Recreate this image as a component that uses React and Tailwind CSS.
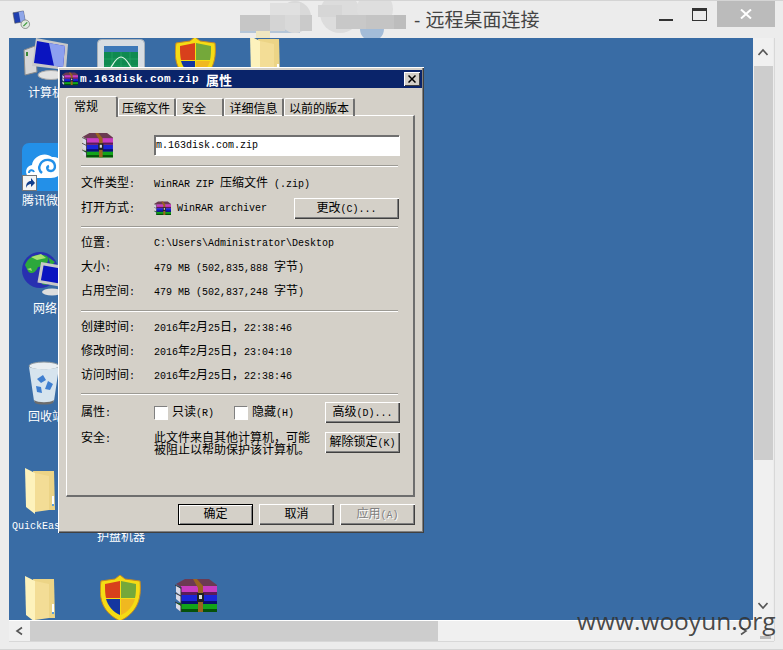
import React from 'react';

const split = text => text.split(/([\u3000-\u9fff\uff00-\uffef]+)/).filter(Boolean);

// SimSun-style mix: CJK at 12px, latin at half width (10px mono)
function T({ children, className = '' }) {
    return (
        <span className={`whitespace-pre font-['Liberation_Mono','Noto_Sans_CJK_SC',monospace] text-[10px] leading-3 [text-spacing-trim:space-all] ${className}`}>
            {split(children).map((part, i) =>
                /[\u3000-\u9fff\uff00-\uffef]/.test(part) ? (
                    <span key={i} className="font-['Noto_Sans_CJK_SC',sans-serif] text-[12px]">
                        {part}
                    </span>
                ) : (
                    part
                )
            )}
        </span>
    );
}

function Rar({ className }) {
    return (
        <svg viewBox="0 0 42 34" className={className}>
            <path d="M1 24l5 9h36v-9z" fill="#0f8f14" />
            <path d="M1 24l5 3v6l-5-4z" fill="#d9d9e6" />
            <rect x="6" y="25" width="36" height="8" fill="#12a41a" />
            <rect x="6" y="30" width="36" height="3" fill="#06520a" />
            <path d="M1 14l5 3v7l-5-4z" fill="#d9d9e6" />
            <rect x="6" y="16" width="36" height="9" fill="#1a24d8" />
            <rect x="6" y="22" width="36" height="3" fill="#0a0e70" />
            <path d="M1 6l5 4v7l-5-4z" fill="#d9d9e6" />
            <path d="M1 5l9-5h24l8 6v2H6z" fill="#6b3a52" />
            <rect x="6" y="7" width="36" height="9" fill="#c83cc0" />
            <rect x="6" y="13" width="36" height="3" fill="#5c1c58" />
            <path d="M18 0h4l6 7v26h-5V9z" fill="#9a6420" />
            <rect x="22" y="14" width="7" height="9" fill="#222" />
            <rect x="24" y="16" width="3" height="4" fill="#ddd" />
            <path d="M0 6l6 3M0 14l6 3M0 23l6 3M6 8v25" stroke="#333" fill="none" />
        </svg>
    );
}

function Shield({ className }) {
    return (
        <svg viewBox="0 0 41 46" className={className}>
            <path d="M20 0l5 4 15 2c2 20-4 32-20 40C4 38-2 26 1 6l14-2z" fill="#f5dc14" stroke="#c98a20" />
            <path d="M20 6L5 9c0 5 0 10 1 14h14z" fill="#d8401c" />
            <path d="M21 6l15 3c0 5 0 10-1 14H21z" fill="#74a83a" />
            <path d="M6 24h14v16C13 37 8 31 6 24z" fill="#1436a0" />
            <path d="M21 24h14c-2 7-7 13-14 16z" fill="#f0b820" />
        </svg>
    );
}

function Folder({ className }) {
    return (
        <svg viewBox="0 0 30 46" className={className}>
            <path d="M8 3h21l1 39H12z" fill="#ecd486" />
            <path d="M0 0l10 5 0 41-9-7z" fill="#fdf2bc" />
            <path d="M10 5l14 3 0 34-14 2z" fill="#f3dd96" />
            <rect x="27" y="28" width="2" height="10" fill="#fff" />
            <rect x="27" y="36" width="2" height="2" fill="#5aa0e0" />
        </svg>
    );
}

function Computer({ className }) {
    return (
        <svg viewBox="0 0 46 42" className={className}>
            <path d="M1 12l11-4 2 26-12 3z" fill="#d6d6d6" stroke="#8a8a8a" />
            <rect x="3" y="14" width="2" height="4" fill="#3a8a3a" />
            <path d="M13 0l32 6-2 26-34-4z" fill="#c8c8c8" />
            <path d="M14 3l28 5-2 21-29-4z" fill="#0a14c0" />
            <path d="M26 5l16 3-2 21-9-1z" fill="#8ca0f0" />
            <ellipse cx="28" cy="37" rx="13" ry="4.5" fill="#e2e2e2" stroke="#aaa" />
        </svg>
    );
}

function MonitorApp({ className }) {
    return (
        <svg viewBox="0 0 48 40" className={className}>
            <rect x="0.5" y="0.5" width="47" height="40" rx="4" fill="#d8dde2" stroke="#a8b0b8" />
            <rect x="7" y="7" width="34" height="6" fill="#3d78b8" />
            <rect x="7" y="13" width="34" height="27" fill="#0f8a50" />
            <path d="M7 20h34M7 27h34M15 13v27M24 13v27M33 13v27" stroke="#2ea86c" strokeWidth="0.6" />
            <path d="M9 32c6 0 8-14 15-14s9 14 15 14" stroke="#dff5e6" strokeWidth="1.2" fill="none" />
        </svg>
    );
}

function QqTile({ className }) {
    return (
        <svg viewBox="0 0 48 48" className={className}>
            <rect width="48" height="48" rx="7" fill="#2390e8" />
            <path d="M8 35c-6-3-5-12 2-13 1-9 13-14 20-8 7-1 13 5 11 12-1 6-7 9-12 9z" fill="#fff" />
            <path d="M20 30c-6-5-1-14 7-13 7 1 8 10 2 11-4 0-5-4-2-5" stroke="#2390e8" strokeWidth="2.4" fill="none" />
            <path d="M7 30c0-3 4-4 5-1" stroke="#2390e8" strokeWidth="2" fill="none" />
        </svg>
    );
}

function ShortcutArrow({ className }) {
    return (
        <svg viewBox="0 0 15 16" className={className}>
            <rect x="0.5" y="0.5" width="14" height="15" fill="#f4f4f4" stroke="#777" />
            <path d="M4 13c0-5 2-7 5-7V3l4 5-4 4V9c-2 0-4 1-5 4z" fill="#123e8c" />
        </svg>
    );
}

function Globe({ className }) {
    return (
        <svg viewBox="0 0 46 46" className={className}>
            <circle cx="18" cy="19" r="18" fill="#2830b0" />
            <path d="M3 14c4-10 14-12 22-9 4 6-3 11-9 11-2 6-8 8-10 4zM18 24c6-2 11-1 13 3-2 6-7 8-11 6zM26 6l7 5-4 4z" fill="#2ca83c" />
            <path d="M9 6l10-3 5 4-9 2zM5 18l4-1 1 3z" fill="#a8e070" />
            <rect x="17" y="13" width="25" height="21" fill="#c8c8c8" transform="rotate(10 30 24)" />
            <rect x="20" y="16" width="19" height="15" fill="#0a14c0" transform="rotate(10 30 24)" />
            <ellipse cx="30" cy="41" rx="10" ry="3.5" fill="#dedede" />
        </svg>
    );
}

function Bin({ className }) {
    return (
        <svg viewBox="0 0 32 44" className={className}>
            <ellipse cx="16" cy="5" rx="15" ry="4" fill="#e8eef2" stroke="#8e989e" />
            <path d="M1 6l5 34c3 3 17 3 20 0l5-34c-6 3-24 3-30 0z" fill="#d6e4ee" />
            <path d="M6 39c4 3 16 3 20 0l-1 3c-4 2-14 2-18 0z" fill="#6d6d6d" />
            <path d="M9 18l6-4 3 5-5 3zM20 20l5 3-3 6-5-1zM8 25l5 1 1 6-5-1z" fill="#3f7fd0" />
        </svg>
    );
}

function Chevron({ d, className = 'w-[10px] h-[8px]' }) {
    return (
        <svg viewBox="0 0 10 8" className={className}>
            <path d={d} stroke="#555" strokeWidth="1.6" fill="none" />
        </svg>
    );
}

function Sep({ className = '' }) {
    return <div className={`mr-[2px] h-[2px] border-t border-[#9c9a94] border-b border-b-white ${className}`} />;
}

function Btn({ children, className = '', def = false, disabled = false }) {
    return (
        <div
            className={`flex items-center justify-center h-[21px] ${
                def
                    ? 'border border-black shadow-[inset_1px_1px_0_#fff,inset_-1px_-1px_0_#808080]'
                    : 'shadow-[inset_1px_1px_0_#fff,inset_-1px_-1px_0_#404040,inset_-2px_-2px_0_#808080]'
            } ${disabled ? 'text-[#808080] [text-shadow:1px_1px_0_#fff]' : 'text-black'} ${className}`}
        >
            <T>{children}</T>
        </div>
    );
}

function Row({ label, children, className = '' }) {
    return (
        <div className={`flex items-center h-6 ${className}`}>
            <T className="w-[73px] shrink-0 inline-block">{label}</T>
            {children}
        </div>
    );
}

function Tab({ label, className = '' }) {
    return (
        <div className={`h-[18px] pt-px leading-[14px] border-l border-t border-white border-r-2 border-r-[#707070] rounded-t-[2px] text-center ${className}`}>
            <T>{label}</T>
        </div>
    );
}

function Check() {
    return <div className="w-[13px] h-[13px] bg-white border-t border-l border-[#808080] shadow-[1px_1px_0_#fff]" />;
}

function Dialog() {
    return (
        <div className="absolute left-[49px] top-[29px] w-[366px] h-[466px] bg-[#d4d0c8] pt-[3px] px-[2px] shadow-[inset_1px_1px_0_#fff,inset_-1px_-1px_0_#404040,inset_-2px_-2px_0_#808080]">
            <div className="h-[18px] bg-[#0a246a] flex items-center pl-[2px] pr-[2px]">
                <Rar className="w-[16px] h-[14px] shrink-0" />
                <span className="ml-[2px] font-['Liberation_Mono',monospace] font-bold text-[11px] tracking-[0.4px] text-white whitespace-pre">m.163disk.com.zip </span>
                <span className="font-['Noto_Sans_CJK_SC',sans-serif] font-bold text-[13px] leading-none text-white">属性</span>
                <div className="ml-auto w-[16px] h-[14px] bg-[#d4d0c8] flex items-center justify-center shadow-[inset_1px_1px_0_#fff,inset_-1px_-1px_0_#404040]">
                    <svg viewBox="0 0 8 8" className="w-[8px] h-[8px]">
                        <path d="M0.5 0.5l7 7M7.5 0.5l-7 7" stroke="#000" strokeWidth="1.5" />
                    </svg>
                </div>
            </div>

            <div className="flex items-end mt-[8px] ml-[6px] h-[20px] relative z-10">
                <div className="w-[52px] h-[21px] -mb-px bg-[#d4d0c8] pl-[7px] pt-px leading-[14px] border-l border-t border-white border-r-2 border-r-[#707070] rounded-t-[3px]">
                    <T>常规</T>
                </div>
                <Tab label="压缩文件" className="w-[58px] pr-px" />
                <Tab label="安全" className="w-[48px] !text-left pl-[5px]" />
                <Tab label="详细信息" className="w-[60px]" />
                <Tab label="以前的版本" className="w-[71px]" />
            </div>

            <div className="ml-[6px] w-[349px] h-[382px] -mt-px pl-[14px] pr-[13px] border-t border-l border-white border-r-2 border-r-[#6e6e6e] border-b-2 border-b-[#6e6e6e] text-black">
                <div className="flex items-center h-5 mt-[19px]">
                    <Rar className="w-[33px] h-[25px] shrink-0" />
                    <div className="ml-[40px] mr-px flex-1 h-5 bg-white flex items-center border-t-2 border-l-2 border-[#707070] shadow-[1px_1px_0_#fff]">
                        <T>m.163disk.com.zip</T>
                    </div>
                </div>
                <Sep className="mt-[10px]" />
                <Row label="文件类型:" className="mt-[4px]">
                    <T>WinRAR ZIP 压缩文件 (.zip)</T>
                </Row>
                <Row label="打开方式:" className="mt-[1px]">
                    <Rar className="w-[17px] h-[15px] shrink-0" />
                    <T className="ml-[6px] mt-[2px]">WinRAR archiver</T>
                    <Btn className="ml-auto mr-[1px] w-[105px]">更改(C)...</Btn>
                </Row>
                <Sep className="mt-[6px]" />
                <Row label="位置:" className="mt-[3px]">
                    <T className="mt-[2px]">{'C:\\Users\\Administrator\\Desktop'}</T>
                </Row>
                <Row label="大小:">
                    <T>479 MB (502,835,888 字节)</T>
                </Row>
                <Row label="占用空间:">
                    <T>479 MB (502,837,248 字节)</T>
                </Row>
                <Sep className="mt-[7px]" />
                <Row label="创建时间:" className="mt-[3px]">
                    <T>{'2016年2月25日\uff0c22:38:46'}</T>
                </Row>
                <Row label="修改时间:">
                    <T>{'2016年2月25日\uff0c23:04:10'}</T>
                </Row>
                <Row label="访问时间:">
                    <T>{'2016年2月25日\uff0c22:38:46'}</T>
                </Row>
                <Sep className="mt-[6px]" />
                <div className="flex items-center h-[21px] mt-[7px]">
                    <T className="w-[73px] shrink-0 inline-block">属性:</T>
                    <Check />
                    <T className="ml-[5px] w-[62px] inline-block">只读(R)</T>
                    <Check />
                    <T className="ml-[5px]">隐藏(H)</T>
                    <Btn className="ml-auto w-[75px]">高级(D)...</Btn>
                </div>
                <div className="flex items-start mt-[9px] h-[21px]">
                    <T className="w-[73px] shrink-0 inline-block mt-[-1px]">安全:</T>
                    <div className="flex flex-col text-[12px] leading-3 font-['Noto_Sans_CJK_SC',sans-serif] whitespace-nowrap mt-[-1px] [text-spacing-trim:space-all]">
                        <span>{'此文件来自其他计算机\uff0c可能'}</span>
                        <span>被阻止以帮助保护该计算机。</span>
                    </div>
                    <Btn className="ml-auto w-[75px]">解除锁定(K)</Btn>
                </div>
            </div>

            <div className="flex justify-end gap-[6px] mt-[7px] mr-[7px]">
                <Btn def className="w-[75px]">确定</Btn>
                <Btn className="w-[75px]">取消</Btn>
                <Btn disabled className="w-[75px]">应用(A)</Btn>
            </div>
        </div>
    );
}

function DeskLabel({ children, className }) {
    return (
        <div className={`absolute text-white leading-3 ${className}`}>
            <T>{children}</T>
        </div>
    );
}

function Desktop() {
    return (
        <div className="relative w-[744px] h-[582px] bg-[#396ca5] overflow-hidden">
            <Computer className="absolute left-[14px] top-[0px] w-[46px] h-[42px]" />
            <DeskLabel className="left-[19px] top-[47px]">计算机</DeskLabel>
            <MonitorApp className="absolute left-[88px] top-[1px] w-[48px] h-[40px]" />
            <Shield className="absolute left-[166px] top-[-1px] w-[41px] h-[46px]" />
            <Folder className="absolute left-[241px] top-[-2px] w-[30px] h-[46px]" />

            <QqTile className="absolute left-[13px] top-[105px] w-[48px] h-[48px]" />
            <ShortcutArrow className="absolute left-[13px] top-[137px] w-[15px] h-[16px]" />
            <DeskLabel className="left-[13px] top-[155px]">腾讯微</DeskLabel>

            <Globe className="absolute left-[13px] top-[213px] w-[46px] h-[46px]" />
            <DeskLabel className="left-[24px] top-[263px]">网络</DeskLabel>

            <Bin className="absolute left-[19px] top-[323px] w-[32px] h-[44px]" />
            <DeskLabel className="left-[19px] top-[371px]">回收站</DeskLabel>

            <Folder className="absolute left-[16px] top-[430px] w-[30px] h-[46px]" />
            <DeskLabel className="left-[3px] top-[479px]">QuickEasy</DeskLabel>
            <DeskLabel className="left-[88px] top-[491px]">护盘机器</DeskLabel>

            <Folder className="absolute left-[16px] top-[538px] w-[30px] h-[46px]" />
            <Shield className="absolute left-[91px] top-[537px] w-[41px] h-[46px]" />
            <Rar className="absolute left-[166px] top-[541px] w-[42px] h-[34px]" />

            <Dialog />
        </div>
    );
}

function TitleMosaic() {
    const cells = [
        [0, 14, 30, 16, '#c6c6c6'], [30, 2, 30, 12, '#e0e0e0'], [30, 14, 15, 16, '#d4d4d4'],
        [60, 14, 12, 16, '#cacaca'], [78, 4, 24, 12, '#d6d6d6'], [96, 14, 30, 14, '#c8c8c8'],
        [126, 14, 28, 14, '#c4c4c4'], [154, 14, 12, 14, '#bdbdbd'],
    ];
    return (
        <svg viewBox="0 0 166 42" className="absolute left-[240px] top-0 w-[166px] h-[42px]">
            <rect x="0" y="28" width="60" height="4" fill="#b5c6d8" />
            <circle cx="132" cy="28" r="12" fill="#a3bcd8" />
            <rect x="16" y="30" width="14" height="8" fill="#efe6c0" />
            <circle cx="55" cy="16" r="16" fill="#d9d9d9" />
            <circle cx="100" cy="12" r="20" fill="#dcdcdc" />
            <circle cx="135" cy="8" r="18" fill="#dedede" />
            {cells.map(([x, y, w, h, c], i) => (
                <rect key={i} x={x} y={y} width={w} height={h} fill={c} />
            ))}
        </svg>
    );
}

export default function App() {
    return (
        <div className="relative w-[783px] h-[650px] bg-[#ececec] border-t border-[#d4d4d4] border-b overflow-hidden">
            <div className="relative h-[37px] flex items-start">
                <svg viewBox="0 0 20 20" className="absolute left-[12px] top-[9px] w-[19px] h-[19px]">
                    <path d="M1 3l11-2 2 11-11 2z" fill="#1f3fb0" stroke="#555" strokeWidth="0.6" />
                    <path d="M7 2l5-1 2 11-5 1z" fill="#8fa6e8" />
                    <circle cx="14" cy="15" r="4.5" fill="#dfe8df" stroke="#555" strokeWidth="0.6" />
                    <path d="M12 17l4-4" stroke="#3d9a3d" strokeWidth="1.4" />
                </svg>
                <TitleMosaic />
                <div className="absolute left-[414px] top-[5px] font-['Noto_Sans_CJK_SC',sans-serif] text-[19px] leading-[26px] text-[#444] whitespace-pre">
                    <span className="font-['Liberation_Sans',sans-serif]">- </span>远程桌面连接
                </div>
                <div className="absolute left-[659px] top-[18px] w-[14px] h-[2px] bg-[#333]" />
                <div className="absolute left-[692px] top-[7px] w-[15px] h-[13px] border border-[#333] border-t-[3px]" />
                <div className="absolute left-[717px] top-0 w-[58px] h-[26px] bg-[#bbbbbb] flex items-center justify-center">
                    <svg viewBox="0 0 12 10" className="w-[12px] h-[10px]">
                        <path d="M1 0.5l10 9M11 0.5l-10 9" stroke="#fff" strokeWidth="2" />
                    </svg>
                </div>
            </div>

            <div className="flex">
                <div className="w-[9px] shrink-0" />
                <Desktop />
                <div className="w-[20px] h-[582px] bg-[#f0f0f0] flex flex-col items-center mr-px">
                    <div className="h-[28px] flex items-center">
                        <Chevron d="M0.5 7l4.5-5 4.5 5" />
                    </div>
                    <div className="w-[19px] ml-px h-[394px] bg-[#cdcdcd]" />
                    <div className="mt-auto h-[28px] flex items-center">
                        <Chevron d="M0.5 1l4.5 5 4.5-5" />
                    </div>
                </div>
                <div className="w-px h-[603px] bg-[#d8d8d8]" />
            </div>

            <div className="flex -mt-[21px] relative">
                <div className="w-[9px] shrink-0" />
                <div className="flex w-[765px] h-[22px] bg-[#f0f0f0] border-t border-white border-b border-b-[#d8d8d8]">
                    <div className="w-[21px] flex items-center justify-center">
                        <Chevron d="M7 0.5l-5 3.5 5 3.5" className="w-[10px] h-[10px]" />
                    </div>
                    <div className="w-[408px] bg-[#cdcdcd]" />
                    <div className="ml-[295px] w-[20px] flex items-center justify-center">
                        <Chevron d="M3 0.5l5 3.5-5 3.5" className="w-[10px] h-[10px]" />
                    </div>
                    <div className="ml-auto self-end mb-[2px] mr-[3px] w-[11px] h-[3px] bg-[#bdbdbd]" />
                </div>
            </div>

            <div className="absolute left-[577px] top-[603px] font-['Open_Sans',sans-serif] text-[24.5px] leading-[34px] text-[#333]/90 whitespace-pre">
                www.wooyun.org
            </div>
        </div>
    );
}
